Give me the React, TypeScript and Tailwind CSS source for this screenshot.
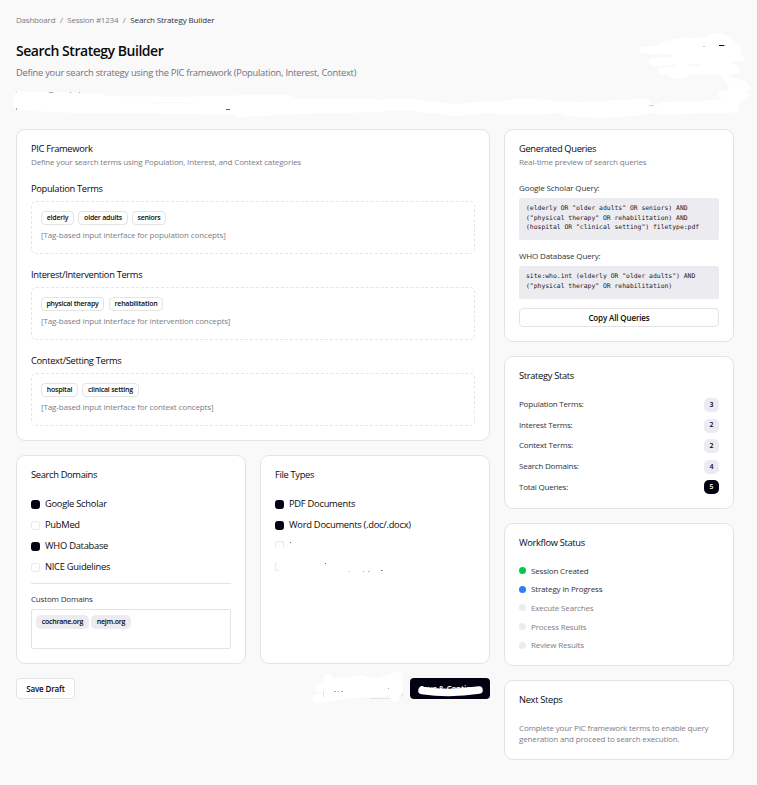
import type { ReactNode } from "react";

function Card({ className = "", children }: { className?: string; children: ReactNode }) {
  return (
    <section className={`flex flex-col rounded-[9px] border border-[#e4e4e4] bg-white p-[14px] ${className}`}>
      {children}
    </section>
  );
}

function Title({ children }: { children: ReactNode }) {
  return <h2 className="h-[10px] text-[9.33px] leading-[10px] tracking-[-0.33px] whitespace-nowrap text-[#0a0a0a]">{children}</h2>;
}

function Outline({ className, children }: { className: string; children: ReactNode }) {
  return (
    <span
      className={`flex h-[14px] items-center justify-center rounded-[4px] border border-[#e4e4e4] text-[7px] font-semibold tracking-[-0.22px] whitespace-nowrap text-[#0a0a0a] ${className}`}
    >
      {children}
    </span>
  );
}

function Tag({ className, children }: { className: string; children: ReactNode }) {
  return (
    <span className={`flex h-[14px] items-center justify-center rounded-[5px] bg-[#ececf0] text-[7px] font-semibold tracking-[-0.24px] text-[#030213] ${className}`}>
      {children}
    </span>
  );
}

function TermGroup({ label, note, children, className }: { label: string; note: string; children: ReactNode; className: string }) {
  return (
    <div className={className}>
      <h3 className="h-[14px] text-[9.33px] leading-[14px] tracking-[-0.33px] text-[#0a0a0a]">{label}</h3>
      <div className="mt-[5px] h-[53px] rounded-[5px] border border-dashed border-[#e6e6e6] p-[9px]">
        <div className="flex gap-[4px]">{children}</div>
        <p className="mt-[4px] text-[8px] leading-[11px] tracking-[-0.13px] text-[#7d7d88]">{note}</p>
      </div>
    </div>
  );
}

function Check({ on = false, children }: { on?: boolean; children: ReactNode }) {
  return (
    <label className="flex h-[14px] items-center gap-[5px] text-[9.33px] leading-[14px] tracking-[-0.26px] whitespace-nowrap text-[#0a0a0a]">
      <span className={`size-[9px] rounded-[2.5px] border ${on ? "border-[#030213] bg-[#030213]" : "border-[#e8e8ea] bg-white"}`} />
      {children}
    </label>
  );
}

const stats = [
  ["Population Terms:", "3"],
  ["Interest Terms:", "2"],
  ["Context Terms:", "2"],
  ["Search Domains:", "4"],
  ["Total Queries:", "5"],
];

const steps = [
  ["Session Created", "bg-[#00c950]", "text-[#30303a]"],
  ["Strategy in Progress", "bg-[#2b7fff]", "text-[#30303a]"],
  ["Execute Searches", "bg-[#ececf0]", "text-[#7d7d88]"],
  ["Process Results", "bg-[#ececf0]", "text-[#7d7d88]"],
  ["Review Results", "bg-[#ececf0]", "text-[#7d7d88]"],
];

function Scribbles() {
  return (
    <svg className="pointer-events-none absolute inset-0" width="757" height="785" viewBox="0 0 757 785" fill="none">
      <g stroke="#fff" strokeLinecap="round" strokeLinejoin="round">
        <path strokeWidth="13" d="M20 98 L29 98 L101 100 M20 104 L60 106 L140 107 L230 108 M110 105 L145 103 L190 103 L285 101" />
        <path strokeWidth="9" d="M20 100 L150 101 L230 103 L285 99 L300 104 L358 103 L380 104" />
        <path strokeWidth="12" d="M238 111 L300 108 L340 107 L380 106 L400 104 L440 108 L455 110 L490 107 L500 108 L520 104 L548 106" />
        <path strokeWidth="12" d="M496 108 L530 109 L566 107 L600 111 L646 105 M566 110 L600 112 L646 109" />
        <path strokeWidth="9" d="M645 103 L560 108 M646 108 L662 110 L735 108 M662 107 L725 104" />
        <path strokeWidth="13" d="M665 48 L680 44 L700 45 L719 39 L730 46 L678 52 M690 52 L735 50" />
        <path strokeWidth="8" d="M644 50 L737 49 M653 62 L740 58 M662 71 L736 70 M672 73 L680 75 L695 70 L728 66" />
        <path strokeWidth="10" d="M680 64 L690 59 M700 56 L736 57 M705 68 L734 69" />
        <path strokeWidth="7" d="M723 73 L730 81 L745 85 L746 88 L730 93 L722 95 L745 96 L735 103 L725 103 M733 84 L729 98" />
        <path strokeWidth="10" d="M328 679 L329 684 M335 684 L360 680 L375 684 L397 677 M331 688 L398 688" />
        <path strokeWidth="9" d="M320 688 L360 684 L398 688 M317 699 L345 694 L398 691 M398 677 L395 697" />
        <path strokeWidth="7.5" d="M422 690.5 Q450 694.5 479 690" />
      </g>
      <path stroke="#f9f9f9" d="M149 103.2 Q160 102.5 188 102.5" />
      <path stroke="#e4e4e4" d="M323.5 691 V697 M370 698.5 H390 M401 697 Q402.5 697 402.5 693" />
      <g fill="#a9a9ae">
        <path d="M49 92 h4 v1 h-4z M70 92 h1 v1 h-1z M79 92 h1 v1 h-1z M16 92 h1 v.6 h-1z M16 108 h1 v2 h-1z" />
        <path d="M334 691 h2 v1 h-2z M338 691 h1 v1 h-1z M341 691 h2 v1 h-2z M388 688 h1 v1 h-1z" />
        <path d="M348 571 h2 v.5 h-2z M363 571 h1 v1 h-1z M368 571 h2 v.7 h-2z" />
      </g>
      <path fill="#66666c" d="M226 109 h4 v1 h-4z M290 542 h1 v1 h-1z M325 563 h1 v1 h-1z M381 570 h1.5 v1 h-1.5z" />
      <path fill="#111" d="M719 45 h5 v1 h-5z" />
      <path fill="#c4c4c4" d="M703 46 h2 v1 h-2z M649 105 h5 v.7 h-5z M724 45 h2 v1 h-2z" />
    </svg>
  );
}

export default function App() {
  return (
    <div className="relative h-[785px] w-[757px] overflow-hidden bg-[#f9f9f9] pt-[14px] pr-[23px] pl-[16px] font-['Open_Sans','Noto_Sans',sans-serif]">
      <nav className="flex h-[12px] gap-[4.6px] text-[8px] leading-[12px] tracking-[-0.12px] whitespace-nowrap text-[#7d7d88]">
        <span className="tracking-[-0.22px]">Dashboard</span>
        <span>/</span>
        <span className="tracking-[-0.22px]">Session #1234</span>
        <span>/</span>
        <span className="text-[#30303a]">Search Strategy Builder</span>
      </nav>
      <h1 className="mt-[15px] h-[20px] text-[14px] leading-[20px] font-semibold tracking-[-0.47px] text-[#0a0a0a]">Search Strategy Builder</h1>
      <p className="mt-[5px] h-[14px] text-[9.33px] leading-[14px] tracking-[-0.25px] text-[#717182]">
        Define your search strategy using the PIC framework (Population, Interest, Context)
      </p>

      <div className="mt-[49px] grid grid-cols-[474px_230px] items-start gap-[14px]">
        <main className="flex flex-col gap-[14px]">
          <Card className="h-[312px]">
            <Title>PIC Framework</Title>
            <p className="mt-[2px] h-[12px] text-[8px] leading-[12px] tracking-[-0.16px] text-[#7d7d88]">
              Define your search terms using Population, Interest, and Context categories
            </p>
            <TermGroup className="mt-[14px]" label="Population Terms" note="[Tag-based input interface for population concepts]">
              <Outline className="w-[33px]">elderly</Outline>
              <Outline className="w-[50px]">older adults</Outline>
              <Outline className="w-[34px]">seniors</Outline>
            </TermGroup>
            <TermGroup className="mt-[14px]" label="Interest/Intervention Terms" note="[Tag-based input interface for intervention concepts]">
              <Outline className="mr-[1px] w-[63px]">physical therapy</Outline>
              <Outline className="w-[54px]">rehabilitation</Outline>
            </TermGroup>
            <TermGroup className="mt-[14px]" label="Context/Setting Terms" note="[Tag-based input interface for context concepts]">
              <Outline className="w-[37px]">hospital</Outline>
              <Outline className="w-[57px]">clinical setting</Outline>
            </TermGroup>
          </Card>

          <div className="grid h-[209px] grid-cols-2 gap-[14px]">
            <Card>
              <Title>Search Domains</Title>
              <div className="mt-[17px] flex flex-col gap-[7px]">
                <Check on>Google Scholar</Check>
                <Check>PubMed</Check>
                <Check on>WHO Database</Check>
                <Check>NICE Guidelines</Check>
              </div>
              <hr className="mt-[9px] border-[#e4e4e4]" />
              <p className="mt-[9px] h-[12px] text-[8px] leading-[12px] tracking-[-0.18px] text-[#30303a]">Custom Domains</p>
              <div className="mt-[4px] flex h-[40px] gap-[2px] rounded-[2px] border border-[#e4e4e4] p-[4px] pt-[5px]">
                <Tag className="w-[53px]">cochrane.org</Tag>
                <Tag className="w-[40px]">nejm.org</Tag>
              </div>
            </Card>
            <Card>
              <Title>File Types</Title>
              <div className="mt-[17px] flex flex-col gap-[7px]">
                <Check on>PDF Documents</Check>
                <Check on>Word Documents (.doc/.docx)</Check>
                <div className="flex h-[14px] items-start pt-[2px]">
                  <span className="h-[7px] w-[9px] rounded-t-[2.5px] border border-b-0 border-[#e8e8ea]" />
                </div>
                <div className="flex h-[14px] items-start pt-[2px]">
                  <span className="h-[9px] w-[4px] rounded-l-[2.5px] border border-t-0 border-r-0 border-[#e8e8ea]" />
                </div>
              </div>
            </Card>
          </div>

          <div className="flex h-[21px] justify-between">
            <button className="w-[59px] rounded-[4px] border border-[#e4e4e4] bg-white text-[8px] leading-[19px] font-semibold tracking-[-0.15px] whitespace-nowrap text-[#0a0a0a]">Save Draft</button>
            <button className="w-[80px] rounded-[4px] bg-[#030213] text-[8px] leading-[21px] font-semibold tracking-[-0.15px] whitespace-nowrap text-white">Save &amp; Continue</button>
          </div>
        </main>

        <aside className="flex flex-col gap-[14px]">
          <Card className="h-[213px]">
            <Title>Generated Queries</Title>
            <p className="mt-[2px] h-[12px] text-[8px] leading-[12px] tracking-[-0.16px] text-[#7d7d88]">Real-time preview of search queries</p>
            <p className="mt-[14px] h-[12px] text-[8px] leading-[12px] tracking-[-0.12px] text-[#30303a]">Google Scholar Query:</p>
            <pre className="mt-[4px] h-[42px] rounded-[2px] bg-[#ececf0] p-[7px] pt-[6px] font-['DejaVu_Sans_Mono',monospace] text-[6.4px] leading-[9.5px] text-[#20202a]">
              {'(elderly OR "older adults" OR seniors) AND\n("physical therapy" OR rehabilitation) AND\n(hospital OR "clinical setting") filetype:pdf'}
            </pre>
            <p className="mt-[10px] h-[12px] text-[8px] leading-[12px] tracking-[-0.12px] text-[#30303a]">WHO Database Query:</p>
            <pre className="mt-[4px] h-[33px] rounded-[2px] bg-[#ececf0] p-[7px] pt-[6px] font-['DejaVu_Sans_Mono',monospace] text-[6.4px] leading-[9.5px] text-[#20202a]">
              {'site:who.int (elderly OR "older adults") AND\n("physical therapy" OR rehabilitation)'}
            </pre>
            <button className="mt-[9px] h-[19px] rounded-[4px] border border-[#e4e4e4] bg-white pt-px text-[8px] leading-[16px] font-semibold tracking-[-0.13px] text-[#0a0a0a]">Copy All Queries</button>
          </Card>

          <Card className="h-[153px]">
            <Title>Strategy Stats</Title>
            <div className="mt-[17px] flex flex-col gap-[6.6px]">
              {stats.map(([name, value], i) => (
                <div key={name} className="flex h-[14px] items-center justify-between text-[8px] text-[#30303a]">
                  <span className="pb-[1.6px] leading-[12px] tracking-[-0.2px]">{name}</span>
                  <span className={`flex h-[14px] w-[15px] items-center justify-center rounded-[5px] text-[7px] font-semibold ${i === 4 ? "bg-[#030213] text-white" : "bg-[#ececf0] text-[#030213]"}`}>{value}</span>
                </div>
              ))}
            </div>
          </Card>

          <Card className="h-[143px]">
            <Title>Workflow Status</Title>
            <div className="mt-[17px] flex flex-col gap-[7px]">
              {steps.map(([name, dot, color]) => (
                <div key={name} className="flex h-[11.6px] items-center gap-[5px]">
                  <span className={`size-[7px] rounded-full ${dot}`} />
                  <span className={`text-[8px] tracking-[-0.15px] ${color}`}>{name}</span>
                </div>
              ))}
            </div>
          </Card>

          <Card className="h-[80px]">
            <Title>Next Steps</Title>
            <p className="mt-[17px] text-[8px] leading-[11px] tracking-[-0.15px] whitespace-nowrap text-[#7d7d88]">
              Complete your PIC framework terms to enable query
              <br />
              generation and proceed to search execution.
            </p>
          </Card>
        </aside>
      </div>
      <Scribbles />
    </div>
  );
}
